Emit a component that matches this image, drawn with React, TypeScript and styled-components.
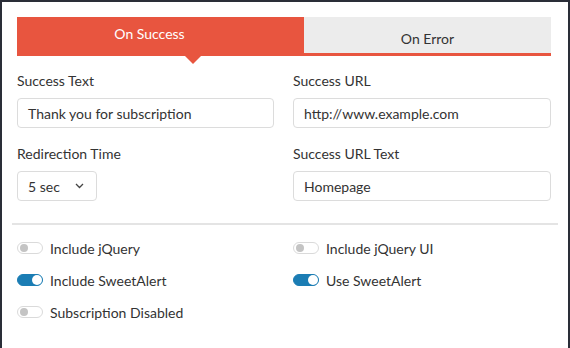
import React from "react";
import styled, { createGlobalStyle } from "styled-components";

const Global = createGlobalStyle`
  body {
    margin: 0;
    background: #ffffff;
    font-family: Lato, "Open Sans", sans-serif;
    color: #333;
  }
`;

const Frame = styled.div`
  width: 570px;
  height: 348px;
  box-sizing: border-box;
  border-top: 2px solid #2a2e38;
  border-left: 2px solid #2a2e38;
  border-right: 2px solid #2a2e38;
  padding: 15px 15px 0 15px;
  background: #fff;
`;

const Tabs = styled.div`
  display: flex;
  height: 39px;
  border-bottom: 3px solid #e8553f;
  box-sizing: border-box;
  width: 534px;
`;

const Tab = styled.div<{ $active?: boolean }>`
  position: relative;
  display: flex;
  justify-content: center;
  align-items: center;
  font-size: 14px;
  box-sizing: border-box;
  ${(p) =>
    p.$active
      ? `
    width: 287px;
    height: 39px;
    background: #e8553f;
    color: #fff;
    padding: 0 22px 7px 0;
  `
      : `
    flex: 1;
    background: #ececec;
    color: #333;
    padding-top: 6px;
  `}
`;

const Arrow = styled.span`
  position: absolute;
  left: 168px;
  bottom: -8px;
  width: 0;
  height: 0;
  border-left: 8px solid transparent;
  border-right: 8px solid transparent;
  border-top: 8px solid #e8553f;
`;

const Form = styled.div`
  display: grid;
  grid-template-columns: 257px 258px;
  column-gap: 19px;
  row-gap: 17px;
  padding: 16px 0 0;
`;

const Field = styled.div`
  display: flex;
  flex-direction: column;
  gap: 8px;
`;

const Label = styled.div`
  font-size: 14px;
  line-height: 18px;
  color: #333;
`;

const Input = styled.div`
  height: 30px;
  box-sizing: border-box;
  border: 1px solid #dcdcdc;
  border-radius: 4px;
  background: #fff;
  padding: 0 10px;
  display: flex;
  align-items: center;
  font-size: 14px;
  color: #333;
`;

const Select = styled(Input)`
  width: 80px;
  justify-content: space-between;
  padding-right: 12px;
`;

const Divider = styled.div`
  height: 2px;
  background: #e4e4e4;
  margin: 22px -5px 0 -5px;
`;

const Toggles = styled.div`
  display: grid;
  grid-template-columns: 276px 258px;
  row-gap: 8px;
  padding-top: 11px;
`;

const ToggleRow = styled.div`
  display: flex;
  align-items: center;
  gap: 7px;
  height: 24px;
  font-size: 14px;
  color: #333;
`;

const Track = styled.span<{ $on?: boolean }>`
  position: relative;
  width: 26px;
  height: 12px;
  box-sizing: border-box;
  border-radius: 6px;
  border: 1px solid ${(p) => (p.$on ? "#1b7db4" : "#dadada")};
  background: ${(p) => (p.$on ? "#1b7db4" : "#fff")};
`;

const Knob = styled.span<{ $on?: boolean }>`
  position: absolute;
  top: ${(p) => (p.$on ? "0px" : "1px")};
  left: ${(p) => (p.$on ? "14px" : "2px")};
  width: ${(p) => (p.$on ? "10px" : "8px")};
  height: ${(p) => (p.$on ? "10px" : "8px")};
  border-radius: 50%;
  background: ${(p) => (p.$on ? "#fff" : "#c4c4c4")};
`;

function Toggle({ on, label }: { on?: boolean; label: string }) {
  return (
    <ToggleRow>
      <Track $on={on}>
        <Knob $on={on} />
      </Track>
      {label}
    </ToggleRow>
  );
}

const Chevron = () => (
  <svg width="9" height="6" viewBox="0 0 9 6" fill="none">
    <path d="M1 1l3.5 3.5L8 1" stroke="#444" strokeWidth="1.3" />
  </svg>
);

export default function App() {
  return (
    <>
      <Global />
      <Frame>
        <Tabs>
          <Tab $active>
            On Success
            <Arrow />
          </Tab>
          <Tab>On Error</Tab>
        </Tabs>
        <Form>
          <Field>
            <Label>Success Text</Label>
            <Input>Thank you for subscription</Input>
          </Field>
          <Field>
            <Label>Success URL</Label>
            <Input>http://www.example.com</Input>
          </Field>
          <Field>
            <Label>Redirection Time</Label>
            <Select>
              5 sec
              <Chevron />
            </Select>
          </Field>
          <Field>
            <Label>Success URL Text</Label>
            <Input>Homepage</Input>
          </Field>
        </Form>
        <Divider />
        <Toggles>
          <Toggle label="Include jQuery" />
          <Toggle label="Include jQuery UI" />
          <Toggle on label="Include SweetAlert" />
          <Toggle on label="Use SweetAlert" />
          <Toggle label="Subscription Disabled" />
        </Toggles>
      </Frame>
    </>
  );
}
